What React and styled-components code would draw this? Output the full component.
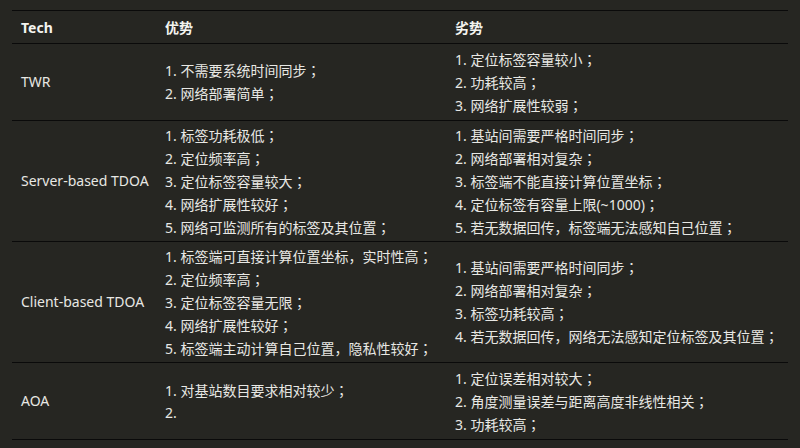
import React from 'react'
import styled, {createGlobalStyle} from 'styled-components'

const rows = [
    {
        tech: 'TWR',
        height: 76,
        pros: ['不需要系统时间同步；', '网络部署简单；'],
        cons: ['定位标签容量较小；', '功耗较高；', '网络扩展性较弱；'],
    },
    {
        tech: 'Server-based TDOA',
        height: 120,
        pros: ['标签功耗极低；', '定位频率高；', '定位标签容量较大；', '网络扩展性较好；', '网络可监测所有的标签及其位置；'],
        cons: ['基站间需要严格时间同步；', '网络部署相对复杂；', '标签端不能直接计算位置坐标；', '定位标签有容量上限(~1000)；', '若无数据回传，标签端无法感知自己位置；'],
    },
    {
        tech: 'Client-based TDOA',
        height: 120,
        pros: ['标签端可直接计算位置坐标，实时性高；', '定位频率高；', '定位标签容量无限；', '网络扩展性较好；', '标签端主动计算自己位置，隐私性较好；'],
        cons: ['基站间需要严格时间同步；', '网络部署相对复杂；', '标签功耗较高；', '若无数据回传，网络无法感知定位标签及其位置；'],
    },
    {
        tech: 'AOA',
        height: 76,
        pros: ['对基站数目要求相对较少；', ''],
        cons: ['定位误差相对较大；', '角度测量误差与距离高度非线性相关；', '功耗较高；'],
    },
]

function Item({n, text}) {
    const semi = text.endsWith('；')
    return (
        <Line>
            {n}. {semi ? text.slice(0, -1) : text}
            {semi && <Semi>；</Semi>}
        </Line>
    )
}

export default function App() {
    return (
        <>
            <Global />
            <Page>
                <Table>
                    <colgroup>
                        <col style={{width: 144}} />
                        <col style={{width: 290}} />
                        <col />
                    </colgroup>
                    <thead>
                        <Row>
                            <Head>Tech</Head>
                            <Head>优势</Head>
                            <Head>劣势</Head>
                        </Row>
                    </thead>
                    <tbody>
                        {rows.map(r => (
                            <Row key={r.tech}>
                                <Cell h={r.height}>{r.tech}</Cell>
                                <Cell h={r.height}>
                                    {r.pros.map((p, i) => <Item key={i} n={i + 1} text={p} />)}
                                </Cell>
                                <Cell h={r.height}>
                                    {r.cons.map((p, i) => <Item key={i} n={i + 1} text={p} />)}
                                </Cell>
                            </Row>
                        ))}
                    </tbody>
                </Table>
            </Page>
        </>
    )
}

const Global = createGlobalStyle`
    html, body {
        margin: 0;
        background: #262622;
    }
`

const Page = styled.div`
    padding: 10px 12px 0 12px;
    font-family: "Noto Sans", "Noto Sans CJK SC", sans-serif;
    font-size: 14px;
    color: #e8e8e4;
`

const Table = styled.table`
    width: 776px;
    border-collapse: collapse;
    table-layout: fixed;
`

const Row = styled.tr`
    border-top: 1px solid #0a0a0a;
    border-bottom: 1px solid #0a0a0a;
`

const Head = styled.th`
    height: 32px;
    padding: 0 9px;
    text-align: left;
    font-weight: 700;
    font-size: 14px;
    color: #f4f4f0;
    vertical-align: middle;
`

const Cell = styled.td`
    height: ${p => p.h}px;
    padding: 0 9px;
    vertical-align: middle;
    line-height: 22px;
    white-space: nowrap;
`

const Line = styled.div`
    min-height: 22px;
`

const Semi = styled.span`
    font-family: "Noto Sans CJK TC", sans-serif;
`
